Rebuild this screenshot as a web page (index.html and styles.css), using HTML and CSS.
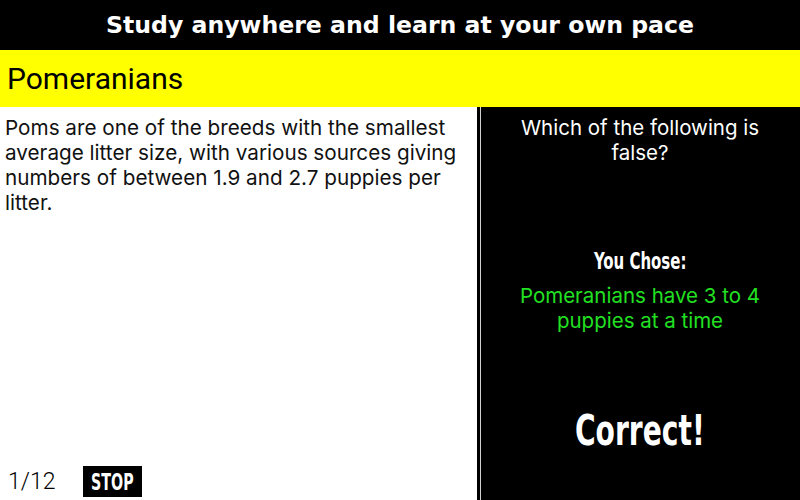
FILE: index.html
```html
<!DOCTYPE html>
<html lang="en">
<head>
<meta charset="utf-8" />
<title>Pomeranians quiz</title>
<link rel="stylesheet" href="styles.css">
</head>
<body class="page">
	<header class="navbarTop">Study anywhere and learn at your own pace</header>
	<div class="topic">Pomeranians</div>
	<div class="main">
		<div class="fact">
			<p class="fact-text">Poms are one of the breeds with the smallest average litter size, with various sources giving numbers of between 1.9 and 2.7 puppies per litter.</p>
			<div class="footer">
				<span class="counter">1/12</span>
				<button class="stop" type="button"><span class="narrow">STOP</span></button>
			</div>
		</div>
		<div class="quiz">
			<div class="question">Which of the following is false?</div>
			<div class="chose-label"><span class="narrow">You Chose:</span></div>
			<div class="answer">Pomeranians have 3 to 4 puppies at a time</div>
			<div class="result"><span class="narrow">Correct!</span></div>
		</div>
	</div>
</body>
</html>
```

FILE: styles.css
```css
html {
	width: 100%;
	height: 100%;
}

.page {
	margin: 0;
	width: 800px;
	height: 500px;
	overflow: hidden;
	background-color: #FFFFFF;
	font-family: Inter, "Liberation Sans", sans-serif;
}

.navbarTop {
	height: 50px;
	background: #000000;
	color: #FFFFFF;
	display: flex;
	align-items: center;
	justify-content: center;
	font-family: "DejaVu Sans", sans-serif;
	font-weight: bold;
	font-size: 23.6px;
}

.topic {
	height: 57px;
	background: #FFFF00;
	color: #000000;
	display: flex;
	align-items: center;
	padding-left: 7px;
	font-family: Roboto, sans-serif;
	font-size: 30px;
}

.main {
	display: flex;
	height: 393px;
}

.fact {
	width: 477px;
	display: flex;
	flex-direction: column;
}

.fact-text {
	margin: 0;
	padding: 8px 6px 0 5px;
	font-size: 20.7px;
	line-height: 25px;
	color: #111111;
}

.footer {
	margin-top: auto;
	display: flex;
	align-items: center;
	padding: 0 0 3px 8px;
}

.counter {
	font-family: Roboto, sans-serif;
	font-size: 23px;
	font-weight: 300;
	width: 75px;
}

/* condensed display face, squeezed from DejaVu bold */
.narrow {
	display: inline-block;
	font-family: "DejaVu Sans", sans-serif;
	font-weight: bold;
	transform: scaleX(0.65);
}

.stop {
	border: none;
	background: #000000;
	color: #FFFFFF;
	height: 31px;
	width: 59px;
	padding: 0;
	font-size: 23px;
	display: flex;
	align-items: center;
	justify-content: center;
	overflow: visible;
}

.stop .narrow {
	transform: scaleX(0.62);
}

.quiz {
	flex: 1;
	background: #000000;
	border-left: 3px solid #000000;
	box-shadow: inset 4px 0 0 -3px #D0D0D0;
	color: #FFFFFF;
	text-align: center;
	display: flex;
	flex-direction: column;
	padding: 8px 30px 0 30px;
}

.question {
	font-size: 20.5px;
	line-height: 25px;
}

.chose-label {
	margin-top: 82px;
	font-size: 23px;
	line-height: 28px;
}

.answer {
	margin-top: 8px;
	color: #22E022;
	font-size: 20.5px;
	line-height: 25px;
}

.result {
	margin-top: 72px;
	font-size: 42px;
	line-height: 50px;
}

.result .narrow {
	transform: scaleX(0.67);
}
```
